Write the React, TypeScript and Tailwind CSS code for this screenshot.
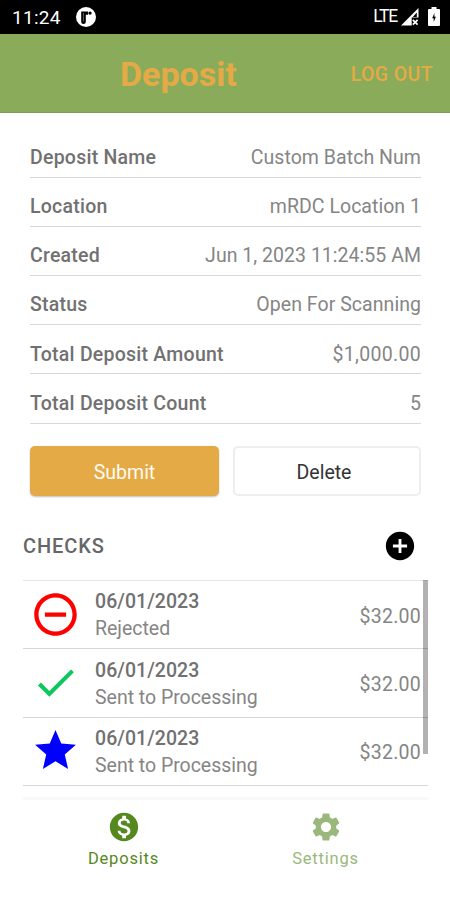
import type { ReactNode } from "react";
import {
  MdAddCircle,
  MdCheck,
  MdMonetizationOn,
  MdRemoveCircleOutline,
  MdSettings,
  MdStar,
} from "react-icons/md";

const details = [
  { label: "Deposit Name", value: "Custom Batch Num", spacing: "tracking-[0.05px]" },
  { label: "Location", value: "mRDC Location 1", spacing: "tracking-[0.03px]" },
  { label: "Created", value: "Jun 1, 2023 11:24:55 AM", spacing: "tracking-[0.03px]" },
  { label: "Status", value: "Open For Scanning", spacing: "tracking-[0.05px]" },
  { label: "Total Deposit Amount", value: "$1,000.00", spacing: "tracking-[0.3px]" },
  { label: "Total Deposit Count", value: "5", spacing: "tracking-normal" },
];

const checks = [
  {
    icon: <MdRemoveCircleOutline className="size-[51px] text-[#ff0000]" />,
    date: "06/01/2023",
    status: "Rejected",
    amount: "$32.00",
  },
  {
    icon: <MdCheck className="size-[49px] text-[#0bc75c]" />,
    date: "06/01/2023",
    status: "Sent to Processing",
    amount: "$32.00",
  },
  {
    icon: <MdStar className="size-[49px] text-[#0000ff]" />,
    date: "06/01/2023",
    status: "Sent to Processing",
    amount: "$32.00",
  },
];

function StatusBar() {
  return (
    <div className="flex h-[34px] items-center bg-black pl-3 pr-2.5 text-white">
      <span className="pt-px text-[19px] leading-none tracking-[0.3px]">11:24</span>
      <svg viewBox="0 0 20 20" className="ml-[15px] size-5">
        <circle cx="10" cy="10" r="10" fill="#fff" />
        <path d="M5.2 4.5H12v3.3H9.8v7a2 2 0 0 1-4.600 0z" fill="#000" />
        <path d="M7.4 6v8.5" stroke="#777" strokeWidth="0.8" />
        <circle cx="14" cy="6.1" r="1.7" fill="#000" />
      </svg>
      <span className="ml-auto text-[17.5px] leading-none tracking-[-1.2px]">LTE</span>
      <svg viewBox="0 0 18 18" className="ml-[4px] size-[18px]">
        <path d="M0 17.5 17.5 0v9.5h-6.8v8z" fill="#fff" />
        <path d="M15.8 4.5v4.500h-4z" fill="#000" />
        <path d="m11.8 11.8 4.8 4.8m0-4.8-4.8 4.8" stroke="#fff" strokeWidth="1.7" />
      </svg>
      <svg viewBox="0 0 12 19" className="ml-[9px] mb-[2px] h-[19px] w-3">
        <path d="M3.5 0h5v2H11a1 1 0 0 1 1 1v15a1 1 0 0 1-1 1H1a1 1 0 0 1-1-1V3a1 1 0 0 1 1-1h2.5z" fill="#fff" />
        <path d="M6.4 6 4.2 11.2h1.5V15l2.2-5.2H6.4z" fill="#000" />
      </svg>
    </div>
  );
}

function Header() {
  return (
    <header className="grid h-[79px] grid-cols-[120px_1fr_auto] items-center border-b border-[#7f9f50] bg-[#8aac5a] pr-[17px] text-[#e5aa45]">
      <span />
      <h1 className="pt-[2px] text-[34px] font-bold leading-none">Deposit</h1>
      <button className="pt-[3px] text-[19.5px] font-medium leading-none tracking-[0.4px]">LOG OUT</button>
    </header>
  );
}

function Tab({ icon, label, className }: { icon: ReactNode; label: string; className: string }) {
  return (
    <button className={`flex w-[90px] flex-col items-center ${className}`}>
      {icon}
      <span className="mr-px mt-[5px] text-[16.5px] leading-5 tracking-[0.8px]">{label}</span>
    </button>
  );
}

export default function App() {
  return (
    <div className="h-[900px] w-[450px] overflow-hidden bg-white font-[Roboto,sans-serif] text-[#767676]">
      <StatusBar />
      <Header />

      <dl className="ml-[30px] mr-[29px] pt-[15.5px]">
        {details.map(({ label, value, spacing }) => (
          <div
            key={label}
            className="flex h-[49.2px] items-center justify-between whitespace-nowrap border-b border-[#d8d8d8] pt-[10px] text-[19.5px] leading-none"
          >
            <dt className="font-medium tracking-[0.24px] text-[#717171]">{label}</dt>
            <dd className={`text-[#858585] ${spacing}`}>{value}</dd>
          </div>
        ))}
      </dl>

      <div className="ml-[30px] mr-[29px] mt-[22.5px] grid h-[50px] grid-cols-[189px_188px] gap-[14px] text-[19.5px]">
        <button className="rounded-[5px] bg-[#e3aa46] pt-[2px] text-[#fffaf0] shadow-[0_1px_2px_rgba(0,0,0,0.25)]">
          Submit
        </button>
        <button className="rounded-[5px] border-2 border-[#eeeeee] pt-[2px] text-[#333333]">
          <span className="mr-1.5">Delete</span>
        </button>
      </div>

      <section className="ml-[23px] mr-[22px]">
        <div className="flex h-[84px] items-center justify-between pr-[11px] pt-[15px]">
          <h2 className="text-[20px] font-medium leading-none tracking-[0.9px] text-[#666666]">CHECKS</h2>
          <MdAddCircle className="size-[34px] text-black" />
        </div>
        <div className="relative h-[217px] border-t border-[#e6e6e6]">
          {checks.map((check, i) => (
            <div
              key={i}
              className="flex h-[68.3px] items-center border-b border-[#d6d6d6] text-[19.5px]"
            >
              <div className="flex w-[64px] justify-center pb-px">{check.icon}</div>
              <div className="ml-[8px] pt-[1.4px] leading-[27px]">
                <div className="font-medium tracking-[0.05px] text-[#717171]">{check.date}</div>
                <div className="tracking-[-0.02px] text-[#858585]">{check.status}</div>
              </div>
              <div className="ml-auto mr-[7px] pt-[3px] tracking-[0.25px] text-[#858585]">{check.amount}</div>
            </div>
          ))}
          <div className="absolute -top-px right-0 h-[174px] w-[5px] bg-black/30" />
        </div>
        <div className="h-[3px] bg-[#f9f9f9]" />
      </section>

      <nav className="flex justify-between pl-[79px] pr-[79px] pt-[10px]">
        <Tab icon={<MdMonetizationOn className="size-[34px]" />} label="Deposits" className="text-[#568820]" />
        <Tab icon={<MdSettings className="size-[34px]" />} label="Settings" className="text-[#9ab87b]" />
      </nav>
    </div>
  );
}
